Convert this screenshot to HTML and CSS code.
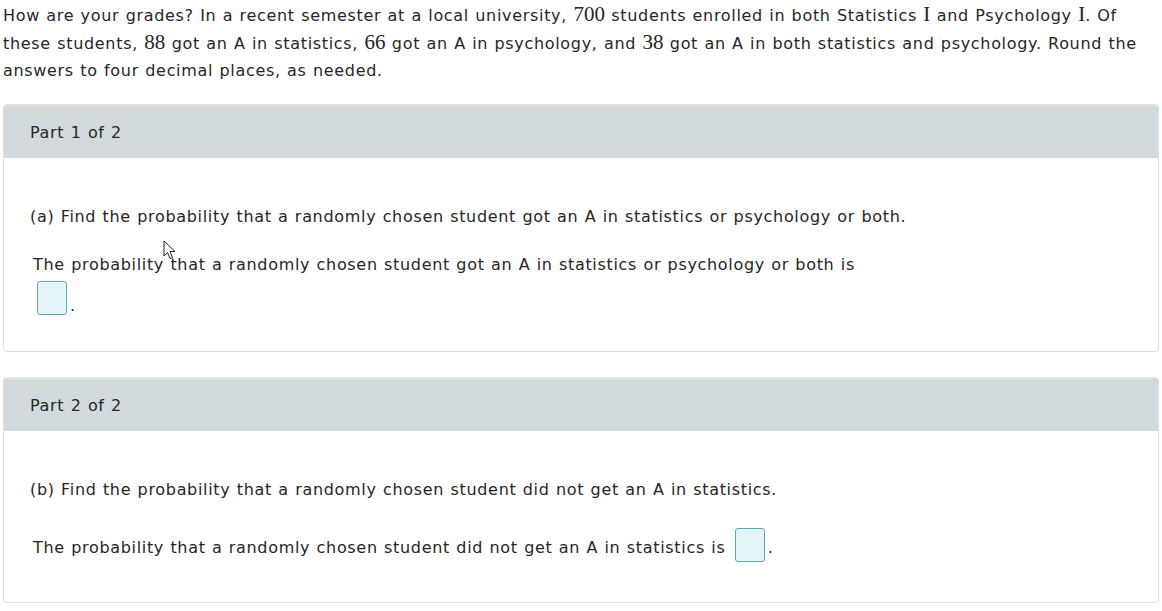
FILE: index.html
```html
<!DOCTYPE html>
<html>
<head>
<meta charset="utf-8">
<link rel="stylesheet" href="styles.css">
</head>
<body>
<p class="intro">How are your grades? In a recent semester at a local university, <span class="m">700</span> students enrolled in both Statistics <span class="m">I</span> and Psychology <span class="m">I</span>. Of these students, <span class="m">88</span> got an A in statistics, <span class="m">66</span> got an A in psychology, and <span class="m">38</span> got an A in both statistics and psychology. Round the answers to four decimal places, as needed.</p>

<section class="card card1">
  <div class="head">Part 1 of 2</div>
  <div class="body">
    <p class="q">(a) Find the probability that a randomly chosen student got an A in statistics or psychology or both.</p>
    <p class="ans">The probability that a randomly chosen student got an A in statistics or psychology or both is</p>
    <div class="ansline"><span class="box"></span><span class="dot">.</span></div>
  </div>
</section>

<section class="card card2">
  <div class="head">Part 2 of 2</div>
  <div class="body">
    <p class="q">(b) Find the probability that a randomly chosen student did not get an A in statistics.</p>
    <p class="ans">The probability that a randomly chosen student did not get an A in statistics is <span class="box inl"></span><span class="dot">.</span></p>
  </div>
</section>

<svg class="cursor" width="14" height="20" viewBox="0 0 14 20"><path d="M1 1 L1 16 L4.5 12.5 L7 18.5 L9.5 17.5 L7 11.5 L12 11.5 Z" fill="#fff" stroke="#222" stroke-width="1"/></svg>
</body>
</html>
```
FILE: styles.css
```css
html, body {
  margin: 0;
  padding: 0;
  background: #fff;
}
body {
  font-family: "DejaVu Sans", Verdana, sans-serif;
  font-size: 16px;
  letter-spacing: 0.68px;
  word-spacing: 0.6px;
  color: #262626;
  padding: 0 3px;
  position: relative;
  width: 1156px;
}
p { margin: 0; }
.m {
  font-family: "Liberation Serif", "Times New Roman", serif;
  font-size: 21px;
  letter-spacing: 0;
}
.intro {
  line-height: 27px;
  padding-top: 1px;
}
.card {
  border: 1px solid #d7dfe2;
  border-radius: 4px;
  overflow: hidden;
}
.card1 { margin-top: 20px; }
.card2 { margin-top: 25px; }
.head {
  background: #d2dadd;
  height: 52px;
  line-height: 54px;
  padding-left: 26px;
  border-top: 1px solid #e2e8ea;
}
.body {
  padding: 47px 26px 0 26px;
}
.card1 .body { padding-bottom: 36px; }
.card2 .body { padding-bottom: 40px; }
.q { line-height: 24px; }
.ans {
  margin-top: 24px;
  padding-left: 3px;
  line-height: 24px;
}
.card2 .ans { margin-top: 32px; }
.ansline {
  display: flex;
  align-items: flex-end;
  padding-left: 7px;
  margin-top: 4px;
}
.box {
  display: inline-block;
  width: 28px;
  height: 32px;
  background: #e5f4f7;
  border: 1px solid #5fa9b5;
  border-radius: 3px;
  box-sizing: content-box;
}
.inl {
  vertical-align: middle;
  margin-left: 3px;
  margin-top: -6px;
}
.dot { margin-left: 3px; }
.cursor {
  position: absolute;
  left: 163px;
  top: 240px;
}
```
